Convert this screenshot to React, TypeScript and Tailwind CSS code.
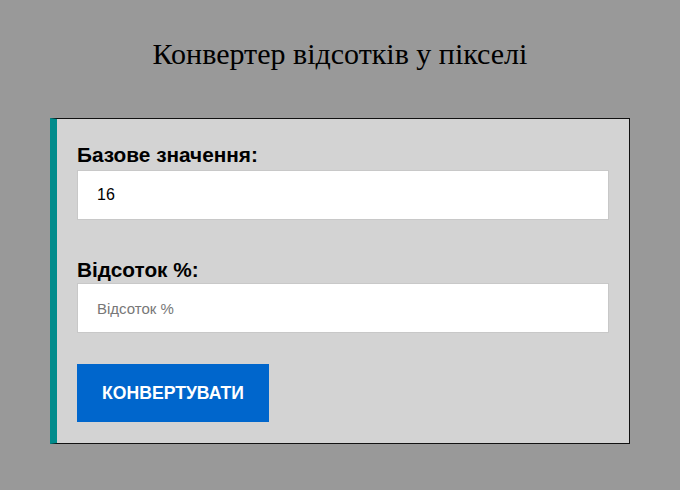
export default function App() {
  return (
    <main className="min-h-[490px] w-full bg-[#999999] pt-[36px] font-['Liberation_Sans',Arial,sans-serif]">
      <h1 className="text-center font-['Liberation_Serif','DejaVu_Serif',serif] text-[30px] leading-[36px] text-black">
        Конвертер відсотків у пікселі
      </h1>

      <section className="mx-auto mt-[46px] w-[580px] border border-l-[7px] border-[#111111] border-l-[#008b8b] bg-[#d3d3d3] px-[20px] pt-[24px] pb-[21px]">
        <label className="block text-[20.8px] font-bold leading-[24px] text-black">Базове значення:</label>
        <input
          type="text"
          defaultValue="16"
          className="mt-[3px] block h-[50px] w-full border border-[#c8c8c8] bg-white px-[19px] text-[16px] text-black outline-none"
        />

        <label className="mt-[38px] block text-[20.8px] font-bold leading-[24px] text-black">Відсоток %:</label>
        <input
          type="text"
          placeholder="Відсоток %"
          className="mt-[1px] block h-[50px] w-full border border-[#c8c8c8] bg-white px-[19px] text-[15px] text-black outline-none placeholder:text-[#777777]"
        />

        <button className="mt-[31px] h-[58px] w-[192px] bg-[#0066cc] text-[17.6px] font-bold uppercase text-white">
          Конвертувати
        </button>
      </section>
    </main>
  );
}
